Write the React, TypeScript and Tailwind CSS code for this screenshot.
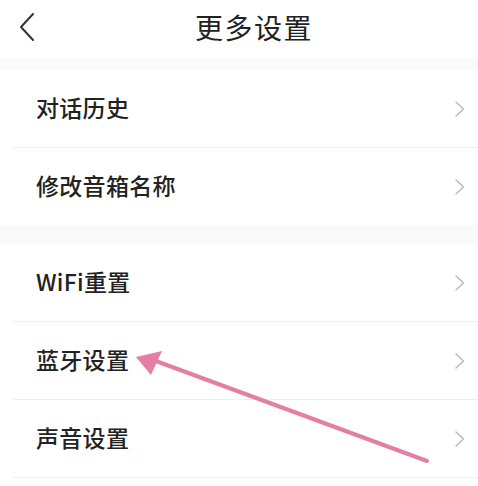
import React from 'react';

const font = { fontFamily: '"Noto Sans CJK SC", "Noto Sans", sans-serif' };

const Chevron = () => (
  <svg width="12" height="18" viewBox="0 0 12 18" fill="none" className="text-[#b8b8b8]">
    <path d="M2 2l7.5 7L2 16" stroke="currentColor" strokeWidth="1.4" strokeLinecap="round" strokeLinejoin="round" />
  </svg>
);

interface RowProps {
  label: string;
  divider?: boolean;
}

const Row: React.FC<RowProps> = ({ label, divider }) => (
  <div className="bg-white">
    <div className="h-[77px] flex items-center justify-between pl-[36px] pr-[12px]">
      <span className="text-[23px] text-[#222] font-medium tracking-[0.3px] -mt-[3px]">{label}</span>
      <Chevron />
    </div>
    {divider && <div className="ml-[13px] h-px bg-[#efefef]" />}
  </div>
);

export default function App() {
  return (
    <div className="relative w-[478px] h-[486px] bg-white overflow-hidden" style={font}>
      <div className="h-[58px] flex items-center relative">
        <div className="pl-[18px] -mt-[4px]">
          <svg width="18" height="30" viewBox="0 0 18 30" fill="none">
            <path d="M15 2L3 15l12 13" stroke="#333" strokeWidth="2" strokeLinecap="round" strokeLinejoin="round" />
          </svg>
        </div>
        <div className="absolute inset-x-0 top-0 h-[54px] flex items-center justify-center pl-[30px] pointer-events-none">
          <span className="text-[28px] text-[#222] tracking-[1.5px]">更多设置</span>
        </div>
      </div>
      <div className="h-[12px] bg-[#fafafa]" />
      <Row label="对话历史" divider />
      <Row label="修改音箱名称" />
      <div className="h-[19px] bg-[#fafafa]" />
      <Row label="WiFi重置" divider />
      <Row label="蓝牙设置" divider />
      <Row label="声音设置" divider />

      <svg className="absolute inset-0 pointer-events-none" width="478" height="486" viewBox="0 0 478 486">
        <path d="M427 461L145 357" stroke="#e47fa3" strokeWidth="4" strokeLinecap="round" />
        <path d="M136 357L162 351L151 375Z" fill="#e47fa3" />
      </svg>
    </div>
  );
}
